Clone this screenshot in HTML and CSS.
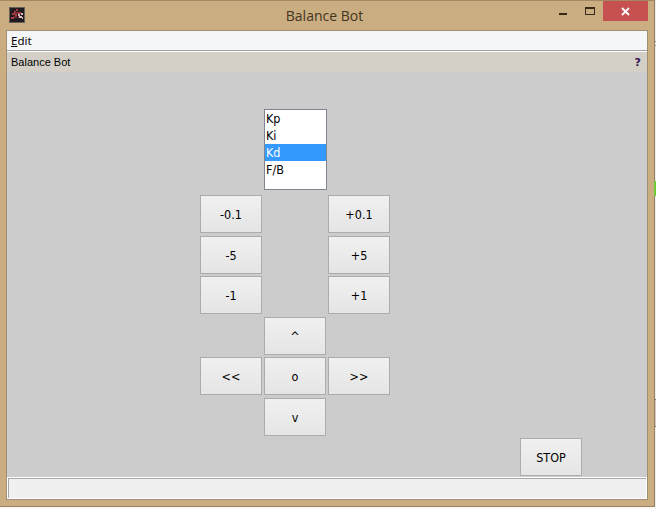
FILE: index.html
```html
<!DOCTYPE html>
<html lang="en">
<head>
<meta charset="utf-8">
<title>Balance Bot</title>
<link rel="stylesheet" href="styles.css">
</head>
<body>
<div class="window">
  <header class="titlebar">
    <svg class="app-icon" viewBox="0 0 16 16" width="16" height="16" shape-rendering="crispEdges">
      <path fill="#656059" d="M0 0h16v16H0z"/><path fill="#211b20" d="M1 1h14v14H1z"/>
      <path fill="#a83c40" d="M7 2h2v2H7zM5 4h2v2H5zM9 5h3v2H9zM3 6h3v2H3zM6 7h2v2H6zM2 10h3v2H2z"/>
      <path fill="#d9bec2" d="M9 7h2v2H9zM12 6h2v2h-2zM10 9h3v2h-3zM13 10h1v2h-1z"/>
      <path fill="#752e35" d="M6 5h3v2H6zM5 9h3v2H5zM9 9h1v2H9z"/>
    </svg>
    <h1 class="title">Balance Bot</h1>
    <div class="controls">
      <svg width="65" height="20" viewBox="0 0 65 20">
        <path fill="#382a18" d="M21 12h8v2h-8z"/>
        <path fill="#382a18" fill-rule="evenodd" d="M47 6h10v8H47zM48 8h8v5h-8z"/>
      </svg>
      <button class="close" aria-label="Close"><svg width="45" height="20" viewBox="0 0 45 20"><path d="M19 7l7 7M26 7l-7 7" stroke="#fff" stroke-width="1.8"/></svg></button>
    </div>
  </header>
  <main class="client">
    <nav class="menu"><span><u>E</u>dit</span></nav>
    <div class="caption"><span>Balance Bot</span><b class="help">?</b></div>
    <section class="canvas">
      <ul class="list"><li>Kp</li><li>Ki</li><li class="selected">Kd</li><li>F/B</li></ul>
      <div class="pad">
        <button class="left">-0.1</button><button class="right">+0.1</button>
        <button class="left">-5</button><button class="right">+5</button>
        <button class="left">-1</button><button class="right">+1</button>
        <button class="mid">^</button>
        <button class="left">&lt;&lt;</button><button class="mid">o</button><button class="right">&gt;&gt;</button>
        <button class="mid">v</button>
      </div>
      <button class="stop">STOP</button>
    </section>
    <footer class="status"></footer>
  </main>
</div>
<aside class="behind"><i class="rule"></i><i class="green"></i><i class="edge"></i></aside>
</body>
</html>
```
FILE: styles.css
```css
* { box-sizing: border-box; }
body {
  margin: 0;
  width: 656px;
  height: 509px;
  overflow: hidden;
  display: flex;
  background: #fbf8f2;
  color: #000;
  font: 12.5px/17px "DejaVu Sans Condensed", "DejaVu Sans", sans-serif;
}
.window {
  flex: none;
  width: 655px;
  height: 507px;
  padding: 0 7px 7px 6px;
  background: #caae82;
  border-top: 1px solid #a58761;
  border-right: 1px solid #96805f;
  border-bottom: 1px solid #96805f;
}
.titlebar {
  height: 29px;
  display: grid;
  grid-template-columns: 110px 1fr 110px;
}
.app-icon { margin: 6px 0 0 3px; }
.title {
  margin: 5px 0 0 -4px;
  text-align: center;
  font: 14px/20px "Open Sans", sans-serif;
  color: #43341f;
}
.controls { display: flex; margin: 0 -2px 0 1px; }
.controls svg { display: block; flex: none; }
.close {
  width: 45px;
  height: 20px;
  padding: 0;
  border: 0;
  background: #c75050;
}
.client {
  width: 642px;
  height: 470px;
  border: 1px solid #a08f75;
  display: flex;
  flex-direction: column;
}
.menu {
  height: 20px;
  padding: 1px 0 0 4px;
  background: #f5f6f8;
  border-bottom: 1px solid #a0a0a0;
  font: 11.5px/18px "Noto Sans", sans-serif;
}
.menu u { text-underline-offset: 1px; }
.caption {
  height: 21px;
  padding: 1px 6px 0 4px;
  border-top: 1px solid #fff;
  background: #d4d0c8;
  display: flex;
  justify-content: space-between;
  font: 11px/19px "Liberation Sans", sans-serif;
}
.help { color: #35134f; font: bold 11px/20px "DejaVu Sans", sans-serif; }
.canvas {
  height: 405px;
  padding-top: 37px;
  background: #ccc;
  display: flex;
  flex-direction: column;
}
.list {
  width: 63px;
  height: 81px;
  margin: 0 0 5px 257px;
  padding: 0;
  list-style: none;
  background: #fff;
  border: 1px solid #808690;
}
.list li { height: 17px; padding-left: 1px; line-height: 17px; }
.list .selected { background: #3399ff; color: #fff; }
.pad {
  margin-left: 193px;
  display: grid;
  grid-template-columns: 62px 62px 62px;
  grid-template-rows: 41px 40px 41px 40px 41px 38px;
  column-gap: 2px;
  align-items: start;
}
.left { grid-column: 1; }
.mid { grid-column: 2; }
.right { grid-column: 3; }
.pad button, .stop {
  width: 62px;
  height: 38px;
  padding: 0;
  border: 1px solid #acacac;
  background: linear-gradient(#f0f0f0, #e5e5e5);
  color: #000;
  font: inherit;
}
.stop { margin: 2px 0 0 513px; }
.status {
  height: 22px;
  border: 1px solid #fff;
  background: #f0f0f0;
  box-shadow: inset 1px 1px #a6a6a6;
}
.behind {
  width: 1px;
  height: 509px;
  display: flex;
  flex-direction: column;
  background: #eee;
}
.rule { height: 5px; margin-top: 41px; border: solid #999; border-width: 1px 0; }
.green { height: 15px; margin: 135px 0 0 -1px; background: #70c936; }
.edge { height: 28px; margin-top: 203px; border: solid #827568; border-width: 1px 0; background: #d7cec1; }
```
